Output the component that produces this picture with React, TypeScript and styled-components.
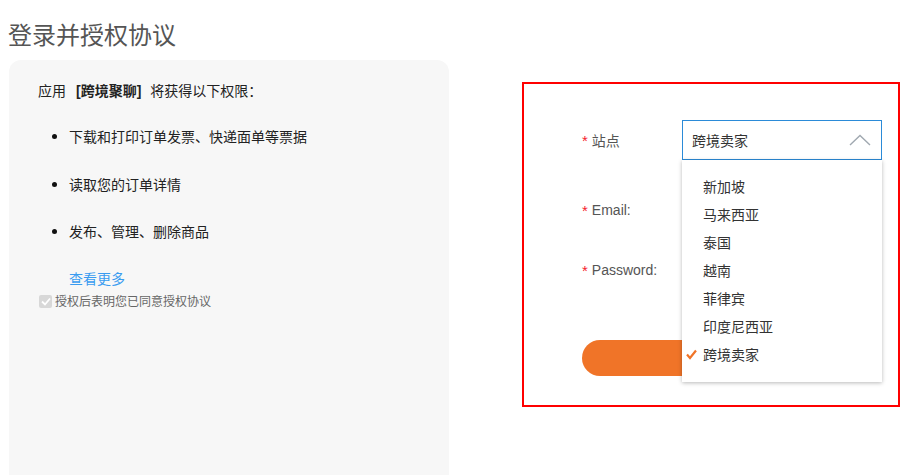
import React from 'react';
import styled, { createGlobalStyle } from 'styled-components';

const GlobalStyle = createGlobalStyle`
  html, body {
    margin: 0;
    padding: 0;
    background: #fff;
  }
  body {
    font-family: "Liberation Sans", "Noto Sans CJK SC", sans-serif;
    color: #333;
  }
`;

const Page = styled.div`
  display: flex;
  align-items: flex-start;
  width: 917px;
  height: 475px;
  overflow: hidden;
  padding-left: 8px;
  box-sizing: border-box;
`;

const LeftColumn = styled.div`
  display: flex;
  flex-direction: column;
  width: 441px;
`;

const Title = styled.h1`
  margin: 0;
  height: 60px;
  padding-top: 20px;
  box-sizing: border-box;
  font-size: 24px;
  font-weight: normal;
  line-height: 32px;
  color: #555;
`;

const Panel = styled.div`
  margin-left: 1px;
  height: 440px;
  padding: 20px 0 0 29px;
  box-sizing: border-box;
  background: #f7f7f7;
  border-radius: 12px;
  font-size: 14px;
  color: #222;
`;

const Intro = styled.div`
  line-height: 22px;
`;

const AppName = styled.strong`
  margin: 0 9px 0 10px;
  font-weight: bold;
  color: #222;
`;

const PermList = styled.ul`
  margin: 24px 0 0;
  padding: 0 0 0 31px;
  list-style: disc;
`;

const PermItem = styled.li`
  line-height: 22px;
  margin-bottom: 25.5px;
  &::marker {
    font-size: 17px;
    color: #111;
  }
`;

const MoreLink = styled.a`
  display: block;
  margin: -1px 0 0 31px;
  line-height: 22px;
  color: #3a9cf0;
  text-decoration: none;
`;

const Agree = styled.label`
  display: flex;
  align-items: center;
  gap: 3px;
  margin-top: 2px;
  font-size: 12px;
  color: #666;
  line-height: 20px;
`;

const CheckBox = styled.span`
  width: 13px;
  height: 13px;
  margin-left: 1px;
  border-radius: 2px;
  background: #d8d8d8;
  display: flex;
  align-items: center;
  justify-content: center;
`;

const FormBox = styled.div`
  margin: 82px 0 0 73px;
  width: 378px;
  height: 325px;
  border: 2px solid #ff0000;
  box-sizing: border-box;
  padding: 36px 0 0 58px;
  position: relative;
`;

const Row = styled.div<{ $gap: number }>`
  display: flex;
  align-items: center;
  height: 40px;
  margin-bottom: ${p => p.$gap}px;
`;

const Label = styled.div`
  width: 100px;
  font-size: 14px;
  color: #555;
  display: flex;
  align-items: center;
`;

const Star = styled.span`
  color: #f5222d;
  margin-right: 4px;
  font-size: 15px;
`;

const SelectWrap = styled.div`
  position: relative;
  width: 200px;
`;

const SelectBox = styled.div`
  height: 40px;
  box-sizing: border-box;
  border: 1px solid #2b8bd8;
  padding: 0 10px 0 9px;
  display: flex;
  align-items: center;
  justify-content: space-between;
  font-size: 14px;
  color: #333;
  background: #fff;
`;

const Menu = styled.ul`
  position: absolute;
  top: 40px;
  left: 0;
  width: 200px;
  margin: 0;
  padding: 13px 0;
  list-style: none;
  background: #fff;
  box-shadow: 0 1px 4px rgba(0, 0, 0, 0.28);
  z-index: 2;
`;

const MenuItem = styled.li`
  position: relative;
  height: 28px;
  line-height: 28px;
  padding-left: 21px;
  font-size: 14px;
  color: #333;
`;

const Tick = styled.svg`
  position: absolute;
  left: 4px;
  top: 8px;
`;

const Submit = styled.div`
  width: 300px;
  height: 36px;
  margin-top: 50px;
  border-radius: 18px;
  background: #f07428;
`;

const sites = ['新加坡', '马来西亚', '泰国', '越南', '菲律宾', '印度尼西亚', '跨境卖家'];
const selected = '跨境卖家';

const App = () => {
  return (
    <Page>
      <GlobalStyle />
      <LeftColumn>
        <Title>登录并授权协议</Title>
        <Panel>
          <Intro>
            应用<AppName>[跨境聚聊]</AppName>将获得以下权限：
          </Intro>
          <PermList>
            <PermItem>下载和打印订单发票、快递面单等票据</PermItem>
            <PermItem>读取您的订单详情</PermItem>
            <PermItem>发布、管理、删除商品</PermItem>
          </PermList>
          <MoreLink href="#">查看更多</MoreLink>
          <Agree>
            <CheckBox>
              <svg width="10" height="9" viewBox="0 0 10 9">
                <polyline points="1,4.5 4,7.5 9,1.5" fill="none" stroke="#fff" strokeWidth="1.8" />
              </svg>
            </CheckBox>
            授权后表明您已同意授权协议
          </Agree>
        </Panel>
      </LeftColumn>

      <FormBox>
        <Row $gap={30}>
          <Label><Star>*</Star>站点</Label>
          <SelectWrap>
            <SelectBox>
              <span>{selected}</span>
              <svg width="22" height="12" viewBox="0 0 22 12">
                <polyline points="1,11 11,1.5 21,11" fill="none" stroke="#a0a8b0" strokeWidth="1.4" />
              </svg>
            </SelectBox>
            <Menu>
              {sites.map(s => (
                <MenuItem key={s}>
                  {s === selected && (
                    <Tick width="11" height="11" viewBox="0 0 11 11">
                      <polyline points="1,5.5 4,9 10,1.5" fill="none" stroke="#f07428" strokeWidth="2.2" />
                    </Tick>
                  )}
                  {s}
                </MenuItem>
              ))}
            </Menu>
          </SelectWrap>
        </Row>
        <Row $gap={20}>
          <Label><Star>*</Star>Email:</Label>
        </Row>
        <Row $gap={0}>
          <Label><Star>*</Star>Password:</Label>
        </Row>
        <Submit />
      </FormBox>
    </Page>
  );
};

export default App;
